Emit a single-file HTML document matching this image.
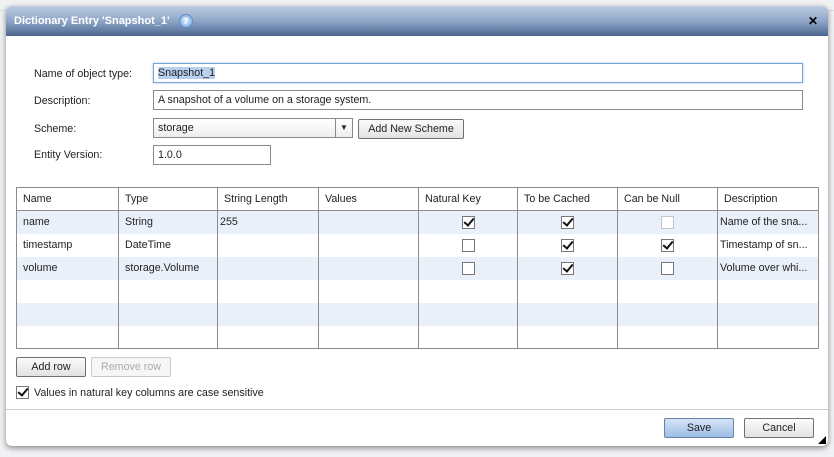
<!DOCTYPE html>
<html><head><style>
body{margin:0;width:834px;height:457px;overflow:hidden;background:#e4e6ea;font-family:"Liberation Sans",sans-serif;font-size:10.7px;color:#222;position:relative}
.bg{position:absolute;left:0;top:0;width:834px;height:457px;background:#f0f1f3}
.bgrow{position:absolute;left:0;width:834px;height:22px;border-bottom:1px solid #d6d9de;color:#888}
.dlg{position:absolute;left:6px;top:6px;width:822px;height:440px;background:#fff;border-radius:6px;box-shadow:0 2px 6px rgba(0,0,0,.45);overflow:hidden}
.title{height:30px;background:linear-gradient(#bccbe2,#8fa6c8 50%,#4b6690);color:#fff;font-weight:bold;font-size:11px;line-height:30px;padding-left:8px}
.q{display:inline-block;width:12px;height:12px;border-radius:50%;background:radial-gradient(#dff0ff,#6aa0d8);color:#fff;font-size:9px;line-height:12px;text-align:center;vertical-align:middle;margin-left:6px;border:1px solid #5d8fc8}
.x{position:absolute;right:10px;top:0;color:#000;font-weight:bold;font-size:12px}
.abs{position:absolute}
.lbl{position:absolute;left:28px}
.inp{position:absolute;border:1px solid #8a8a8a;background:#fff;line-height:18px;padding-left:4px;box-sizing:border-box;height:20px}
.btn{position:absolute;border:1px solid #707070;border-radius:2px;background:linear-gradient(#fbfbfb,#e2e2e2);text-align:center;box-sizing:border-box;line-height:18px}
table{position:absolute;left:10px;top:181px;border-collapse:collapse;width:803px}
td,th{border:1px solid #8c8c8c;height:23px;padding:0 0 0 6px;font-weight:normal;text-align:left;box-sizing:border-box}
th{height:23px;background:#fff}
tr.a td{background:#eaf0fa}
td{border-top:none;border-bottom:none}
tr:last-child td{border-bottom:1px solid #8c8c8c}
.cb{display:inline-block;width:11px;height:11px;border:1px solid #777;background:#fff;position:relative;vertical-align:middle}
.cb.d{border-color:#c4c4c4}
.cb.c::after{content:"";position:absolute;left:3px;top:-1px;width:4px;height:8px;border:solid #111;border-width:0 2px 2px 0;transform:rotate(40deg)}
td.c{text-align:center;padding:0}
</style></head><body>
<div class="bg">
<div class="bgrow" style="top:-12px">&nbsp; SnapMirror <span style="position:absolute;left:340px">cm_storage</span><span style="position:absolute;left:590px">1.0.0</span></div>
</div>
<div class="dlg">
<div class="title">Dictionary Entry 'Snapshot_1' <span class="q">?</span><span class="x">✕</span></div>
<div class="lbl" style="top:62px">Name of object type:</div>
<div class="inp" style="left:147px;top:57px;width:650px;border:1px solid #7aa3d8;box-shadow:0 0 2px #9cc0ee"><span style="background:#b9cfee">Snapshot_1</span></div>
<div class="lbl" style="top:89px">Description:</div>
<div class="inp" style="left:147px;top:84px;width:650px">A snapshot of a volume on a storage system.</div>
<div class="lbl" style="top:117px">Scheme:</div>
<div class="inp" style="left:147px;top:112px;width:200px;background:linear-gradient(#fff,#eee)">storage<span style="position:absolute;right:0;top:0;width:16px;height:18px;border-left:1px solid #8a8a8a;text-align:center;font-size:8px">▼</span></div>
<div class="btn" style="left:352px;top:113px;width:106px;height:20px">Add New Scheme</div>
<div class="lbl" style="top:143px">Entity Version:</div>
<div class="inp" style="left:147px;top:139px;width:118px">1.0.0</div>
<table>
<tr><th style="width:102px">Name</th><th style="width:99px">Type</th><th style="width:101px">String Length</th><th style="width:100px">Values</th><th style="width:99px">Natural Key</th><th style="width:100px">To be Cached</th><th style="width:100px">Can be Null</th><th>Description</th></tr>
<tr class="a"><td>name</td><td>String</td><td style="padding-left:2px">255</td><td></td><td class="c"><span class="cb c"></span></td><td class="c"><span class="cb c"></span></td><td class="c"><span class="cb d"></span></td><td style="padding-left:2px">Name of the sna...</td></tr>
<tr><td>timestamp</td><td>DateTime</td><td></td><td></td><td class="c"><span class="cb"></span></td><td class="c"><span class="cb c"></span></td><td class="c"><span class="cb c"></span></td><td style="padding-left:2px">Timestamp of sn...</td></tr>
<tr class="a"><td>volume</td><td>storage.Volume</td><td></td><td></td><td class="c"><span class="cb"></span></td><td class="c"><span class="cb c"></span></td><td class="c"><span class="cb"></span></td><td style="padding-left:2px">Volume over whi...</td></tr>
<tr><td></td><td></td><td></td><td></td><td></td><td></td><td></td><td></td></tr>
<tr class="a"><td></td><td></td><td></td><td></td><td></td><td></td><td></td><td></td></tr>
<tr><td></td><td></td><td></td><td></td><td></td><td></td><td></td><td></td></tr>
</table>
<div class="btn" style="left:10px;top:351px;width:70px;height:20px">Add row</div>
<div class="btn" style="left:85px;top:351px;width:80px;height:20px;border-color:#c8c8c8;color:#aaa;background:#f6f6f6">Remove row</div>
<span class="cb c" style="position:absolute;left:10px;top:380px"></span>
<div class="abs" style="left:28px;top:381px">Values in natural key columns are case sensitive</div>
<div class="abs" style="left:0;top:403px;width:822px;border-top:1px solid #ccc"></div>
<div class="btn" style="left:658px;top:412px;width:70px;height:20px;border-color:#6b82a8;background:linear-gradient(#d6e4f6,#9dbde6)">Save</div>
<div class="btn" style="left:738px;top:412px;width:70px;height:20px">Cancel</div>
<div class="abs" style="right:2px;bottom:2px;width:0;height:0;border-left:8px solid transparent;border-bottom:8px solid #000"></div>
</div>
</body></html>
